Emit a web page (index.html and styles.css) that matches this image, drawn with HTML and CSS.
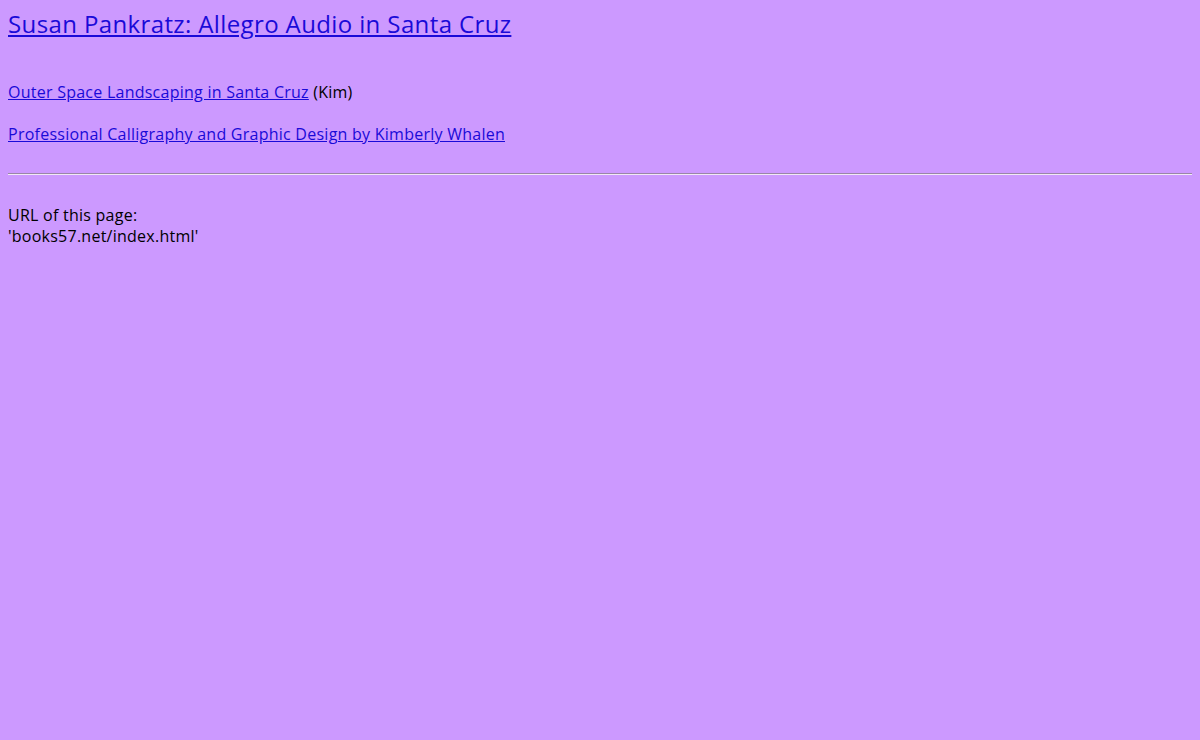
FILE: index.html
```html
<!DOCTYPE html>
<html>
<head>
<meta charset="utf-8">
<title>books57.net</title>
<link rel="stylesheet" href="styles.css">
</head>
<body class="page">
<h1 class="title"><a href="#">Susan Pankratz: Allegro Audio in Santa Cruz</a></h1>
<p class="item first"><a href="#">Outer Space Landscaping in Santa Cruz</a> (Kim)</p>
<p class="item"><a href="#">Professional Calligraphy and Graphic Design by Kimberly Whalen</a></p>
<hr class="rule">
<p class="url">URL of this page:<br>'books57.net/index.html'</p>
</body>
</html>
```
FILE: styles.css
```css
html, body {
  background: #cc99ff;
}
.page {
  margin: 8px;
  font-family: "Open Sans", "Noto Sans", sans-serif;
  font-size: 16px;
  line-height: 21px;
  letter-spacing: 0.25px;
  color: #000;
}
a {
  color: #1a0ad8;
}
.title {
  margin: 0;
  font-size: 24px;
  line-height: 32px;
  font-weight: normal;
  letter-spacing: 0.38px;
}
.item {
  margin: 21px 0 0 0;
}
.item.first {
  margin-top: 42px;
}
.rule {
  margin: 28px 0 0 0;
  border: 0;
  border-top: 1px solid #9a86a8;
  border-bottom: 1px solid #f2e8f8;
  height: 0;
}
.url {
  margin: 30px 0 0 0;
}
```
